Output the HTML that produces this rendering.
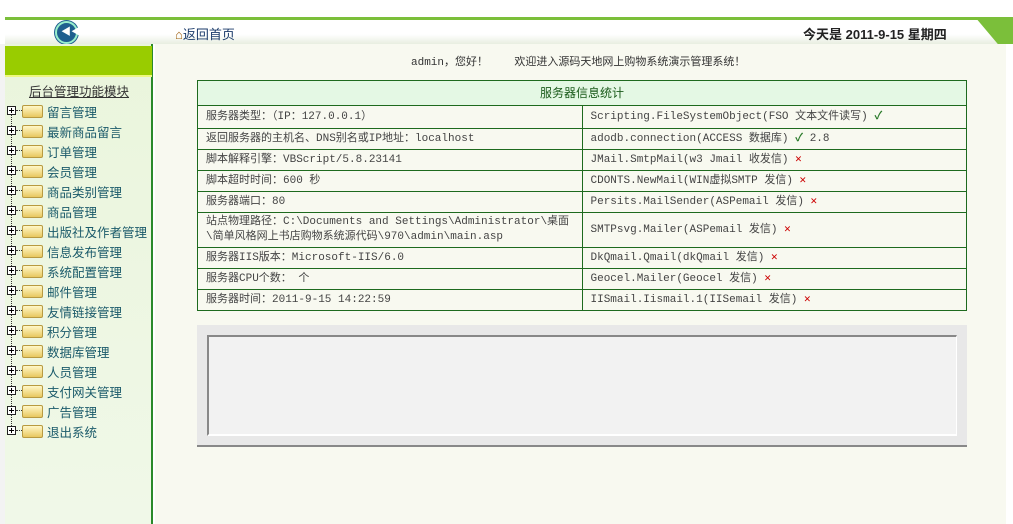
<!DOCTYPE html>
<html><head><meta charset="utf-8"><style>
*{margin:0;padding:0;box-sizing:border-box}
body{width:1013px;height:524px;background:#fff;position:relative;overflow:hidden;font-family:"Liberation Sans","Noto Sans CJK SC",sans-serif;font-size:12px;color:#333}
.a{position:absolute}
.cj{font-family:"Liberation Mono","Noto Sans CJK SC",monospace;font-size:11px}
table{border-collapse:collapse;position:absolute;left:197px;top:80px;width:770px;table-layout:fixed}
td{border:1px solid #1e6a1e;padding:0 8px;color:#444;font-size:11px;font-family:"Liberation Mono","Noto Sans CJK SC",monospace;line-height:15px}
.ok{color:#2a7a2a;font-weight:bold}.x{color:#c00;font-weight:bold}
.item{position:absolute;left:7px;height:18px;font-size:12px;color:#1a5a6a}
.item .pl{position:absolute;left:0;top:3px;width:9px;height:9px;border:1px solid #222;background:#fff}
.item .pl:before{content:"";position:absolute;left:1px;top:3px;width:5px;height:1px;background:#000}
.item .pl:after{content:"";position:absolute;left:3px;top:1px;width:1px;height:5px;background:#000}
.item .dt{position:absolute;left:9px;top:7px;width:6px;border-top:1px dotted #333}
.item .fd{position:absolute;left:15px;top:2px;width:21px;height:13px;background:linear-gradient(#fff8c8,#e8c860);border:1px solid #b89a40;border-radius:2px}
.item span{position:absolute;left:40px;top:-1px;white-space:nowrap;font-size:12.5px}
</style></head><body>
<div class="a" style="left:0;top:0;width:1013px;height:17px;background:#fff"></div>
<div class="a" style="left:5px;top:17px;width:1008px;height:3px;background:#7bbf3a"></div>
<div class="a" style="left:5px;top:20px;width:1008px;height:24px;background:linear-gradient(#fff 60%,#e8eee0)"></div>
<div class="a" style="left:975px;top:17px;width:38px;height:27px;background:#7bbf3a;clip-path:polygon(0 0,100% 0,100% 100%,60% 100%)"></div>
<div class="a" style="left:55px;top:21px;width:23px;height:23px;border-radius:50%;background:#1f5f8f;border:2px solid #9ec;box-shadow:0 0 0 1px #1f5f8f"><div class="a" style="left:4px;top:5px;color:#fff;font-size:10px;line-height:10px">◀◀</div></div>
<div class="a" style="left:175px;top:24px;font-size:13px;color:#1a3a6a"><span style="color:#a06010">⌂</span>返回首页</div>
<div class="a" style="left:803px;top:24px;font-size:13px;font-weight:bold;color:#222">今天是 2011-9-15 星期四</div>
<div class="a" style="left:5px;top:44px;width:148px;height:480px;background:linear-gradient(#eaf5dc,#f0f8e8);border-right:2px solid #2a8a2a"></div>
<div class="a" style="left:5px;top:46px;width:147px;height:29px;background:#99cc00"></div>
<div class="a" style="left:5px;top:75px;width:147px;height:2px;background:#eef880"></div>
<div class="a" style="left:0;top:44px;width:5px;height:480px;background:#f3f3f3"></div>
<div class="a" style="left:29px;top:81px;font-size:12.5px;color:#333;text-decoration:underline">后台管理功能模块</div>
<div class="a" style="left:11px;top:108px;height:322px;border-left:1px dotted #333"></div>
<div class="item" style="top:103px"><i class="pl"></i><i class="dt"></i><i class="fd"></i><span>留言管理</span></div>
<div class="item" style="top:123px"><i class="pl"></i><i class="dt"></i><i class="fd"></i><span>最新商品留言</span></div>
<div class="item" style="top:143px"><i class="pl"></i><i class="dt"></i><i class="fd"></i><span>订单管理</span></div>
<div class="item" style="top:163px"><i class="pl"></i><i class="dt"></i><i class="fd"></i><span>会员管理</span></div>
<div class="item" style="top:183px"><i class="pl"></i><i class="dt"></i><i class="fd"></i><span>商品类别管理</span></div>
<div class="item" style="top:203px"><i class="pl"></i><i class="dt"></i><i class="fd"></i><span>商品管理</span></div>
<div class="item" style="top:223px"><i class="pl"></i><i class="dt"></i><i class="fd"></i><span>出版社及作者管理</span></div>
<div class="item" style="top:243px"><i class="pl"></i><i class="dt"></i><i class="fd"></i><span>信息发布管理</span></div>
<div class="item" style="top:263px"><i class="pl"></i><i class="dt"></i><i class="fd"></i><span>系统配置管理</span></div>
<div class="item" style="top:283px"><i class="pl"></i><i class="dt"></i><i class="fd"></i><span>邮件管理</span></div>
<div class="item" style="top:303px"><i class="pl"></i><i class="dt"></i><i class="fd"></i><span>友情链接管理</span></div>
<div class="item" style="top:323px"><i class="pl"></i><i class="dt"></i><i class="fd"></i><span>积分管理</span></div>
<div class="item" style="top:343px"><i class="pl"></i><i class="dt"></i><i class="fd"></i><span>数据库管理</span></div>
<div class="item" style="top:363px"><i class="pl"></i><i class="dt"></i><i class="fd"></i><span>人员管理</span></div>
<div class="item" style="top:383px"><i class="pl"></i><i class="dt"></i><i class="fd"></i><span>支付网关管理</span></div>
<div class="item" style="top:403px"><i class="pl"></i><i class="dt"></i><i class="fd"></i><span>广告管理</span></div>
<div class="item" style="top:423px"><i class="pl"></i><i class="dt"></i><i class="fd"></i><span>退出系统</span></div>
<div class="a" style="left:155px;top:44px;width:858px;height:480px;background:#f8f9f0"></div>
<div class="a" style="left:1006px;top:44px;width:7px;height:480px;background:#fff"></div>
<div class="a cj" style="left:411px;top:53px;color:#333">admin，您好！&nbsp;&nbsp;&nbsp;&nbsp;欢迎进入源码天地网上购物系统演示管理系统！</div>
<table>
<tr style="height:25px"><td colspan="2" style="background:#e4f8e4;text-align:center;color:#1a5a1a;font-family:'Liberation Sans','Noto Sans CJK SC',sans-serif;font-size:12px">服务器信息统计</td></tr>
<tr style="height:23px"><td style="width:384px">服务器类型：（IP：127.0.0.1）</td><td>Scripting.FileSystemObject(FSO 文本文件读写) <span class="ok">✓</span></td></tr>
<tr style="height:21px"><td>返回服务器的主机名、DNS别名或IP地址：localhost</td><td>adodb.connection(ACCESS 数据库) <span class="ok">✓</span> 2.8</td></tr>
<tr style="height:21px"><td>脚本解释引擎：VBScript/5.8.23141</td><td>JMail.SmtpMail(w3 Jmail 收发信) <span class="x">✕</span></td></tr>
<tr style="height:21px"><td>脚本超时时间：600 秒</td><td>CDONTS.NewMail(WIN虚拟SMTP 发信) <span class="x">✕</span></td></tr>
<tr style="height:21px"><td>服务器端口：80</td><td>Persits.MailSender(ASPemail 发信) <span class="x">✕</span></td></tr>
<tr style="height:35px"><td>站点物理路径：C:\Documents and Settings\Administrator\桌面\简单风格网上书店购物系统源代码\970\admin\main.asp</td><td>SMTPsvg.Mailer(ASPemail 发信) <span class="x">✕</span></td></tr>
<tr style="height:21px"><td>服务器IIS版本：Microsoft-IIS/6.0</td><td>DkQmail.Qmail(dkQmail 发信) <span class="x">✕</span></td></tr>
<tr style="height:21px"><td>服务器CPU个数： 个</td><td>Geocel.Mailer(Geocel 发信) <span class="x">✕</span></td></tr>
<tr style="height:21px"><td>服务器时间：2011-9-15 14:22:59</td><td>IISmail.Iismail.1(IISemail 发信) <span class="x">✕</span></td></tr>
</table>
<div class="a" style="left:197px;top:325px;width:770px;height:122px;background:#e8e8e8;border-bottom:2px solid #888"></div>
<div class="a" style="left:207px;top:335px;width:750px;height:101px;background:#f2f2f2;border-left:2px solid #888;border-top:2px solid #888;border-right:1px solid #fff;border-bottom:2px solid #fff"></div>
</body></html>
